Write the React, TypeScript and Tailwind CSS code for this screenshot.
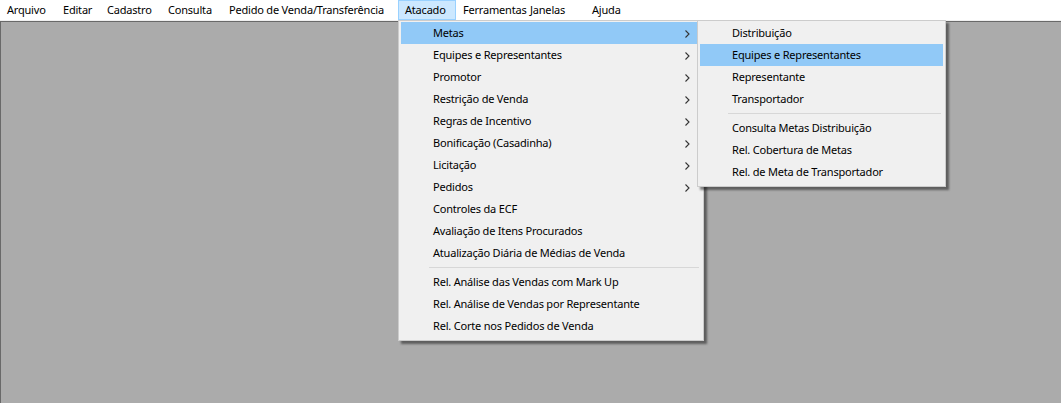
import React from "react";

interface MenuItem {
  label: string;
  sub?: boolean;
  sep?: boolean;
  active?: boolean;
}

const TOP_MENU = [
  { label: "Arquivo", w: 56 },
  { label: "Editar", w: 44 },
  { label: "Cadastro", w: 61 },
  { label: "Consulta", w: 61 },
  { label: "Pedido de Venda/Transferência", w: 176 },
  { label: "Atacado", w: 58, open: true },
  { label: "Ferramentas", w: 67 },
  { label: "Janelas", w: 62 },
  { label: "Ajuda", w: 50 },
];

const ATACADO: MenuItem[] = [
  { label: "Metas", sub: true, active: true },
  { label: "Equipes e Representantes", sub: true },
  { label: "Promotor", sub: true },
  { label: "Restrição de Venda", sub: true },
  { label: "Regras de Incentivo", sub: true },
  { label: "Bonificação (Casadinha)", sub: true },
  { label: "Licitação", sub: true },
  { label: "Pedidos", sub: true },
  { label: "Controles da ECF" },
  { label: "Avaliação de Itens Procurados" },
  { label: "Atualização Diária de Médias de Venda" },
  { label: "", sep: true },
  { label: "Rel. Análise das Vendas com Mark Up" },
  { label: "Rel. Análise de Vendas por Representante" },
  { label: "Rel. Corte nos Pedidos de Venda" },
];

const METAS: MenuItem[] = [
  { label: "Distribuição" },
  { label: "Equipes e Representantes", active: true },
  { label: "Representante" },
  { label: "Transportador" },
  { label: "", sep: true },
  { label: "Consulta Metas Distribuição" },
  { label: "Rel. Cobertura de Metas" },
  { label: "Rel. de Meta de Transportador" },
];

const Chevron = () => (
  <svg width="5" height="8" viewBox="0 0 5 8" className="absolute right-[11px] top-[8px]">
    <path d="M0.5 0.5 L4 4 L0.5 7.5" fill="none" stroke="#333" strokeWidth="1.1" />
  </svg>
);

const PopupMenu = ({ items, className }: { items: MenuItem[]; className: string }) => (
  <div
    className={`absolute flex flex-col bg-[#f0f0f0] border border-[#cccccc] px-[2px] pt-[1px] pb-[3px] shadow-[3px_3px_2px_rgba(0,0,0,0.45)] ${className}`}
  >
    {items.map((it, i) =>
      it.sep ? (
        <div key={i} className="h-[7px] flex items-center pl-[28px] pr-[2px]">
          <div className="h-px w-full bg-[#d7d7d7]" />
        </div>
      ) : (
        <div
          key={i}
          className={`relative h-[22px] leading-[22px] pl-[32px] text-[11px] tracking-[-0.2px] text-black whitespace-nowrap ${
            it.active ? "bg-[#91c9f7]" : ""
          }`}
        >
          {it.label}
          {it.sub && <Chevron />}
        </div>
      )
    )}
  </div>
);

export default function App() {
  return (
    <div
      className="relative flex flex-col w-[1061px] h-[403px] overflow-hidden bg-white"
      style={{ fontFamily: '"Noto Sans", sans-serif' }}
    >
      <nav className="flex h-[20px] bg-white">
        {TOP_MENU.map((m) => (
          <div
            key={m.label}
            style={{ width: m.w }}
            className={`h-[20px] shrink-0 pl-[6px] text-[11px] tracking-[-0.2px] leading-[18px] text-black whitespace-nowrap border ${
              m.open ? "bg-[#cce8ff] border-[#99d1ff]" : "border-transparent"
            }`}
          >
            {m.label}
          </div>
        ))}
      </nav>

      <main className="flex-1 flex flex-col bg-[#ababab] border-t border-t-[#f0f0f0]">
        <div className="flex-1 border-t border-l border-[#696969]" />
      </main>

      <PopupMenu items={ATACADO} className="left-[398px] top-[20px] w-[306px]" />
      <PopupMenu items={METAS} className="left-[697px] top-[20px] w-[249px]" />
    </div>
  );
}
